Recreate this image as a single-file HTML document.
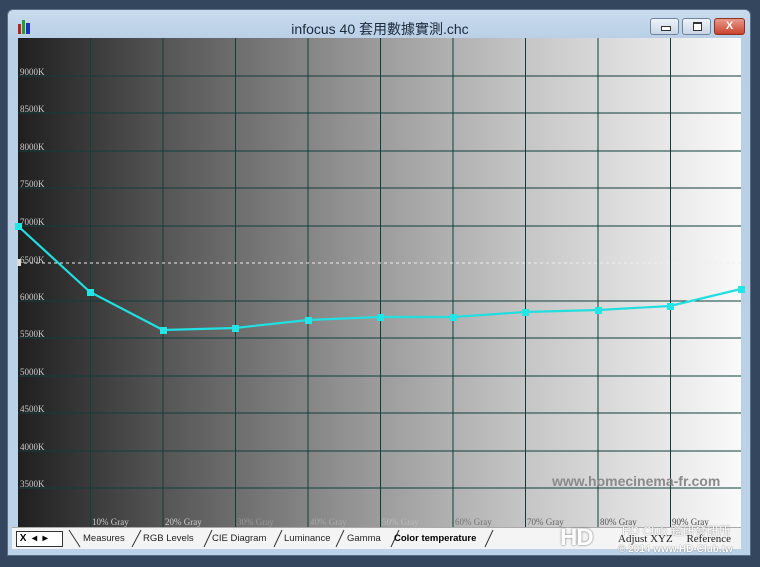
<!DOCTYPE html>
<html><head><meta charset="utf-8"><style>
body{margin:0;width:760px;height:567px;background:#33465e;position:relative;overflow:hidden;font-family:"Liberation Sans","Noto Sans CJK TC",sans-serif}
.win{position:absolute;left:7px;top:9px;width:744px;height:547px;background:linear-gradient(#c9dbee,#b9cfe6 30px,#bcd2e8);border-radius:6px 6px 0 0;border:1px solid #5a6e88;box-sizing:border-box}
.title{position:absolute;left:0;width:744px;top:9px;text-align:center;font-size:14px;color:#1b2a3a}
.btn{position:absolute;top:8px;height:17px;border:1px solid #6f84a0;border-radius:3px;background:linear-gradient(#eef3f9,#c9d6e6);box-sizing:border-box}
.chart{position:absolute;left:18px;top:38px;width:723px;height:489px;background:linear-gradient(90deg,#1f1f1f,#3a3a3a 10%,#555 20%,#6d6d6d 30%,#858585 40%,#9c9c9c 50%,#b1b1b1 60%,#c5c5c5 70%,#d7d7d7 80%,#e8e8e8 90%,#fafafa)}
.tabs{position:absolute;left:12px;top:527px;width:729px;height:21px;background:#f4f4f4;border-top:1px solid #aaa;font-family:"Liberation Sans",sans-serif;font-size:9.5px}
.tab{position:absolute;top:5px;color:#222}
</style></head><body>
<div class="win">
<svg style="position:absolute;left:10px;top:10px" width="14" height="14"><rect x="0" y="4" width="3" height="10" fill="#c0201a"/><rect x="4" y="0" width="3" height="14" fill="#20a030"/><rect x="8" y="3" width="4" height="11" fill="#2030c0"/></svg>
<div class="title">infocus 40 套用數據實測.chc</div>
<div class="btn" style="left:642px;width:29px"><div style="position:absolute;left:10px;top:7px;width:8px;height:3px;border:1px solid #333;background:#fff"></div></div>
<div class="btn" style="left:674px;width:29px"><div style="position:absolute;left:10px;top:3px;width:7px;height:6px;border:1px solid #333;border-top-width:2px;background:#fff"></div></div>
<div class="btn" style="left:706px;width:31px;background:linear-gradient(#e89a8a,#c8442e);border-color:#8a3020;color:#fff;font-size:11px;font-weight:bold;text-align:center;line-height:15px">X</div>
</div>
<div class="chart"></div>
<svg style="position:absolute;left:0;top:0" width="760" height="567">
<g stroke="#0f3e3a" stroke-width="1">
<line x1="18" y1="76" x2="741" y2="76"/><line x1="18" y1="113" x2="741" y2="113"/><line x1="18" y1="151" x2="741" y2="151"/><line x1="18" y1="188" x2="741" y2="188"/><line x1="18" y1="226" x2="741" y2="226"/><line x1="18" y1="301" x2="741" y2="301"/><line x1="18" y1="338" x2="741" y2="338"/><line x1="18" y1="376" x2="741" y2="376"/><line x1="18" y1="413" x2="741" y2="413"/><line x1="18" y1="451" x2="741" y2="451"/><line x1="18" y1="488" x2="741" y2="488"/>
<line x1="90.5" y1="38" x2="90.5" y2="527"/><line x1="163" y1="38" x2="163" y2="527"/><line x1="235.5" y1="38" x2="235.5" y2="527"/><line x1="308" y1="38" x2="308" y2="527"/><line x1="380.5" y1="38" x2="380.5" y2="527"/><line x1="453" y1="38" x2="453" y2="527"/><line x1="525.5" y1="38" x2="525.5" y2="527"/><line x1="598" y1="38" x2="598" y2="527"/><line x1="670.5" y1="38" x2="670.5" y2="527"/>
</g>
<line x1="18" y1="263" x2="741" y2="263" stroke="#eee" stroke-dasharray="3,3"/>
<rect x="17" y="259" width="4" height="7" fill="#ddd"/>
<g font-family="Liberation Serif,serif" font-size="9" fill="#ccc">
<text x="20" y="75">9000K</text><text x="20" y="112">8500K</text><text x="20" y="150">8000K</text><text x="20" y="187">7500K</text><text x="20" y="225">7000K</text><text x="20" y="263">6500K</text><text x="20" y="300">6000K</text><text x="20" y="337">5500K</text><text x="20" y="375">5000K</text><text x="20" y="412">4500K</text><text x="20" y="450">4000K</text><text x="20" y="487">3500K</text>
<text x="92" y="525">10% Gray</text><text x="165" y="525">20% Gray</text><text x="237" y="525" fill="#999">30% Gray</text><text x="310" y="525" fill="#aaa">40% Gray</text><text x="382" y="525" fill="#bbb">50% Gray</text><text x="455" y="525" fill="#777">60% Gray</text><text x="527" y="525" fill="#666">70% Gray</text><text x="600" y="525" fill="#555">80% Gray</text><text x="672" y="525" fill="#444">90% Gray</text>
</g>
<text x="552" y="486" font-family="Liberation Sans,sans-serif" font-weight="bold" font-size="14" fill="#8a8a8a">www.homecinema-fr.com</text>
<polyline fill="none" stroke="#22dede" stroke-width="2.2" points="18,226 90,292 163,330 235,328 308,320 380,317 453,317 525,312 598,310 670,306 741,289"/>
<g fill="#22e6e6"><rect x="15" y="223" width="7" height="7"/><rect x="87" y="289" width="7" height="7"/><rect x="160" y="327" width="7" height="7"/><rect x="232" y="325" width="7" height="7"/><rect x="305" y="317" width="7" height="7"/><rect x="377" y="314" width="7" height="7"/><rect x="450" y="314" width="7" height="7"/><rect x="522" y="309" width="7" height="7"/><rect x="595" y="307" width="7" height="7"/><rect x="667" y="303" width="7" height="7"/><rect x="738" y="286" width="7" height="7"/></g>
</svg>
<div class="tabs">
<div style="position:absolute;left:4px;top:3px;width:45px;height:14px;border:1px solid #333;background:#fff;font-size:10px;font-weight:bold;line-height:14px">&nbsp;X&nbsp;&nbsp;◂&nbsp;&nbsp;▸</div>
<svg style="position:absolute;left:0;top:0" width="500" height="21" stroke="#333" fill="none"><path d="M57 2 L68 19 M120 19 L129 2 M192 19 L200 2 M262 19 L270 2 M324 19 L332 2 M379 19 L387 2 M473 19 L481 2"/></svg>
<span class="tab" style="left:71px">Measures</span><span class="tab" style="left:131px">RGB Levels</span><span class="tab" style="left:200px">CIE Diagram</span><span class="tab" style="left:272px">Luminance</span><span class="tab" style="left:335px">Gamma</span><span class="tab" style="left:382px;font-weight:bold;color:#000">Color temperature</span>
</div>
<div style="position:absolute;left:560px;top:522px;font-family:'Liberation Serif',serif;font-size:11px;color:#fff;text-shadow:0 0 1px #555">
<div style="position:absolute;left:0;top:2px;width:52px;height:22px;font-family:'Liberation Sans';font-weight:bold;font-size:24px;color:#fff;text-shadow:0 0 2px #666;letter-spacing:-1px">HD</div>
<div style="position:absolute;left:62px;top:0;white-space:nowrap;font-family:'Liberation Sans','Noto Sans CJK TC';font-size:12px">HD Club 鑑研發研所</div>
<div style="position:absolute;left:58px;top:11px;white-space:nowrap;color:#222;text-shadow:none">Adjust XYZ &nbsp;&nbsp;&nbsp;&nbsp;Reference</div>
<div style="position:absolute;left:58px;top:22px;white-space:nowrap;font-family:'Liberation Sans';font-size:10px;font-weight:bold">© 2014 www.HD-Club.tw</div>
</div>
</body></html>
